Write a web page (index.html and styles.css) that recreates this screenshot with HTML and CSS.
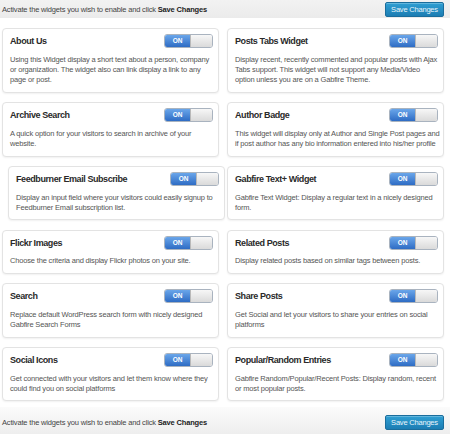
FILE: index.html
```html
<!DOCTYPE html>
<html lang="en">
<head>
    <meta charset="UTF-8">
    <meta name="viewport" content="width=device-width, initial-scale=1.0">
    <title>Widgets</title>
    <link rel="stylesheet" href="styles.css">
</head>
<body>

    <div class="bar bar-top">
        <span class="bar-text">Activate the widgets you wish to enable and click <b>Save Changes</b></span>
        <button class="save-btn">Save Changes</button>
    </div>

    <div class="widgets">
        <div class="card">
            <div class="card-head"><h3>About Us</h3><span class="toggle"><span class="on">ON</span><span class="off"></span></span></div>
            <p>Using this Widget display a short text about a person, company or organization. The widget also can link display a link to any page or post.</p>
        </div>
        <div class="card">
            <div class="card-head"><h3>Posts Tabs Widget</h3><span class="toggle"><span class="on">ON</span><span class="off"></span></span></div>
            <p>Display recent, recently commented and popular posts with Ajax Tabs support. This widget will not support any Media/Video option unless you are on a Gabfire Theme.</p>
        </div>

        <div class="card">
            <div class="card-head"><h3>Archive Search</h3><span class="toggle"><span class="on">ON</span><span class="off"></span></span></div>
            <p>A quick option for your visitors to search in archive of your website.</p>
        </div>
        <div class="card">
            <div class="card-head"><h3>Author Badge</h3><span class="toggle"><span class="on">ON</span><span class="off"></span></span></div>
            <p>This widget will display only at Author and Single Post pages and if post author has any bio information entered into his/her profile</p>
        </div>

        <div class="card card-shift">
            <div class="card-head"><h3>Feedburner Email Subscribe</h3><span class="toggle"><span class="on">ON</span><span class="off"></span></span></div>
            <p>Display an input field where your visitors could easily signup to Feedburner Email subscription list.</p>
        </div>
        <div class="card">
            <div class="card-head"><h3>Gabfire Text+ Widget</h3><span class="toggle"><span class="on">ON</span><span class="off"></span></span></div>
            <p>Gabfire Text Widget: Display a regular text in a nicely designed form.</p>
        </div>

        <div class="card">
            <div class="card-head"><h3>Flickr Images</h3><span class="toggle"><span class="on">ON</span><span class="off"></span></span></div>
            <p>Choose the criteria and display Flickr photos on your site.</p>
        </div>
        <div class="card">
            <div class="card-head"><h3>Related Posts</h3><span class="toggle"><span class="on">ON</span><span class="off"></span></span></div>
            <p>Display related posts based on similar tags between posts.</p>
        </div>

        <div class="card">
            <div class="card-head"><h3>Search</h3><span class="toggle"><span class="on">ON</span><span class="off"></span></span></div>
            <p>Replace default WordPress search form with nicely designed Gabfire Search Forms</p>
        </div>
        <div class="card">
            <div class="card-head"><h3>Share Posts</h3><span class="toggle"><span class="on">ON</span><span class="off"></span></span></div>
            <p>Get Social and let your visitors to share your entries on social platforms</p>
        </div>

        <div class="card">
            <div class="card-head"><h3>Social Icons</h3><span class="toggle"><span class="on">ON</span><span class="off"></span></span></div>
            <p>Get connected with your visitors and let them know where they could find you on social platforms</p>
        </div>
        <div class="card">
            <div class="card-head"><h3>Popular/Random Entries</h3><span class="toggle"><span class="on">ON</span><span class="off"></span></span></div>
            <p>Gabfire Random/Popular/Recent Posts: Display random, recent or most popular posts.</p>
        </div>
    </div>

    <div class="bar bar-bottom">
        <span class="bar-text">Activate the widgets you wish to enable and click <b>Save Changes</b></span>
        <button class="save-btn">Save Changes</button>
    </div>

</body>
</html>
```

FILE: styles.css
```css
body {
    font-family: "Liberation Sans", Arial, sans-serif;
    margin: 0;
    padding: 0;
    background-color: #fff;
    color: #555;
}

/* top and bottom bars */
.bar {
    display: flex;
    justify-content: space-between;
    align-items: center;
    padding: 1px 6px 1px 2px;
}

.bar-top {
    height: 16px;
    background: linear-gradient(#f2f2f2, #ebebeb);
}

.bar-bottom {
    margin-top: 6px;
    padding-top: 8px;
    padding-bottom: 8px;
    align-items: flex-start;
    background: linear-gradient(#fbfbfb, #e4e4e4);
    height: 30px;
}

.bar-text {
    font-size: 7.5px;
    letter-spacing: -0.17px;
    color: #444;
}

.bar-text b {
    color: #222;
}

.bar-bottom .bar-text {
    margin-top: 3px;
}

.save-btn {
    width: 59px;
    height: 15px;
    padding: 0;
    border: 1px solid #1a6d9c;
    border-radius: 2px;
    background: linear-gradient(#2f9fd3, #1c7db3);
    color: #e9f5fb;
    font-family: "Liberation Sans", Arial, sans-serif;
    font-size: 7.5px;
    letter-spacing: -0.2px;
    box-shadow: inset 0 1px 0 rgba(255,255,255,0.25);
}

/* widget grid */
.widgets {
    display: grid;
    grid-template-columns: 1fr 1fr;
    column-gap: 8px;
    row-gap: 9.5px;
    padding: 0 6px 0 2px;
    margin-top: 10px;
}

.card {
    background-color: #fff;
    border: 1px solid #e3e3e3;
    border-radius: 4px;
    box-shadow: 0 1px 2px rgba(0,0,0,0.06);
    padding: 5px 2px 6px 7px;
}

.card-shift {
    margin-left: 6px;
    margin-right: -6px;
}

.card-head {
    display: flex;
    justify-content: space-between;
    align-items: center;
    height: 14px;
}

.card h3 {
    margin: 0;
    font-size: 9px;
    letter-spacing: -0.42px;
    color: #2a2a2a;
}

.card p {
    margin: 6.5px 0 0 0;
    font-size: 7.5px;
    letter-spacing: -0.17px;
    line-height: 10.4px;
    color: #555;
}

/* on/off switch */
.toggle {
    display: flex;
    width: 49px;
    height: 14px;
    margin-right: 3px;
    border: 1px solid #a9b3bf;
    border-radius: 3px;
    overflow: hidden;
    box-sizing: border-box;
}

.toggle .on {
    width: 25px;
    background: linear-gradient(#6aa6ea, #2e6cc4);
    color: #fff;
    font-size: 6.5px;
    font-weight: bold;
    line-height: 12px;
    text-align: center;
}

.toggle .off {
    flex: 1;
    background: linear-gradient(#f7f7f7, #dadada);
    border-left: 1px solid #b9b9b9;
}
```
